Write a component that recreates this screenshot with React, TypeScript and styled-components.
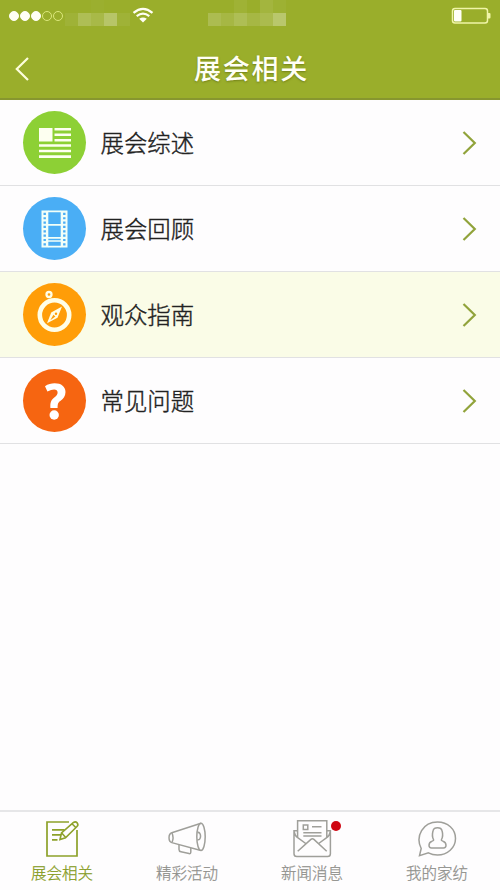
import React from 'react';
import styled, { createGlobalStyle } from 'styled-components';

const GlobalStyle = createGlobalStyle`
  * { box-sizing: border-box; }
  body { margin: 0; background: #fdfcfd; font-family: 'Noto Sans CJK SC', sans-serif; }
  svg { display: block; flex: none; }
`;

const Screen = styled.div`
  width: 500px;
  height: 890px;
  display: flex;
  flex-direction: column;
  overflow: hidden;
  background: #fefdfe;
`;

const Header = styled.header`
  height: 100px;
  flex: none;
  background: #9aae2b;
  border-bottom: 2px solid #87962f;
`;

const StatusBar = styled.div`
  height: 38px;
  display: flex;
  align-items: flex-start;
`;

const Signal = styled.div`
  display: flex;
  gap: 1px;
  width: 65px;
  padding: 11px 0 0 9px;
`;

const Dot = styled.i<{ $on: boolean }>`
  width: 10px;
  height: 10px;
  border-radius: 50%;
  background: ${(p) => (p.$on ? '#fffff5' : 'transparent')};
  border: 1.5px solid ${(p) => (p.$on ? '#fffff5' : '#dce87c')};
`;

const Mosaic = styled.div<{ $columns: number }>`
  display: grid;
  grid-template-columns: repeat(${(p) => p.$columns}, 13px);
  grid-template-rows: repeat(2, 13px);
`;

const Tile = styled.i<{ $alpha: number }>`
  background: rgba(255, 255, 255, ${(p) => p.$alpha});
`;

const WifiSlot = styled.div`
  width: 78px;
  padding: 7px 0 0 2px;
`;

const BatterySlot = styled.div`
  flex: 1;
  display: flex;
  justify-content: flex-end;
  padding: 7px 9px 0 0;
`;

const TitleBar = styled.div`
  height: 60px;
  display: grid;
  grid-template-columns: 60px 1fr 60px;
  align-items: center;
`;

const BackButton = styled.button`
  border: 0;
  background: none;
  padding: 1px 0 0 14px;
`;

const Title = styled.h1`
  margin: 0;
  padding: 0 0 0 3px;
  text-align: center;
  font-size: 27px;
  line-height: 40px;
  font-weight: 500;
  letter-spacing: 1.8px;
  color: #fffff5;
  text-shadow: 0 1px 2px rgba(92, 105, 15, 0.65);
`;

const List = styled.main`
  flex: 1;
`;

const Row = styled.div<{ $active?: boolean }>`
  height: 86px;
  display: flex;
  align-items: center;
  padding: 0 23px;
  background: ${(p) => (p.$active ? '#fafce7' : '#fefdfe')};
  border-bottom: 1px solid #e1e1e3;
`;

const Badge = styled.div<{ $color: string }>`
  width: 63px;
  height: 63px;
  border-radius: 50%;
  background: ${(p) => p.$color};
  display: flex;
  align-items: center;
  justify-content: center;
  flex: none;
`;

const Label = styled.span`
  flex: 1;
  margin-left: 14.5px;
  padding-bottom: 1px;
  font-size: 23.4px;
  line-height: 34px;
  font-weight: 300;
  color: #222;
  -webkit-text-stroke: 0.4px #222;
`;

const Tabs = styled.nav`
  height: 80px;
  flex: none;
  display: grid;
  grid-template-columns: repeat(4, 125px);
  border-top: 2px solid #e6e6e8;
`;

const Tab = styled.button<{ $active?: boolean }>`
  border: 0;
  background: none;
  padding: 7px 1px 0 0;
  font: inherit;
  font-size: 15.5px;
  line-height: 22px;
  font-weight: 300;
  color: ${(p) => (p.$active ? '#869b22' : '#90908c')};
  -webkit-text-stroke: 0.25px currentColor;
  display: flex;
  flex-direction: column;
  align-items: center;
  gap: 2px;
`;

const TabIcon = styled.div<{ $active?: boolean }>`
  position: relative;
  width: 40px;
  height: 40px;
  color: ${(p) => (p.$active ? '#8da12a' : '#9f9f9a')};
`;

const Notice = styled.i`
  position: absolute;
  left: 39px;
  top: 2px;
  width: 10px;
  height: 10px;
  border-radius: 50%;
  background: #cf0612;
`;

const carrierTiles = [0, 0, 0.02, 0, 0, 0.06, 0.2, 0.14, 0.29, 0.06];
const clockTiles = [0, 0, 0.05, 0, 0.09, 0.04, 0.18, 0.12, 0.2, 0.12, 0.17, 0.31];

const Wifi = () => (
  <svg width="22" height="17" viewBox="0 0 22 17" fill="none" stroke="#fffff5" strokeWidth="2.2">
    <path d="M1.5 5.8Q11-2.2 20.5 5.8M4.7 9.2Q11 4.2 17.3 9.2" />
    <path d="M7.2 11.8Q11 9.2 14.8 11.8L11 15.5Z" fill="#fffff5" stroke="none" />
  </svg>
);

const Battery = () => (
  <svg width="40" height="18" viewBox="0 0 40 18" fill="none">
    <rect x="1.5" y="1.5" width="35" height="14.5" rx="2.5" stroke="#f0f5a8" strokeWidth="1.5" />
    <rect x="3" y="3" width="7.5" height="11.5" rx="1" fill="#fffff8" />
    <path d="M37 6h1.5q1 0 1 1v3.5q0 1-1 1H37z" fill="#f0f5a8" />
  </svg>
);

const ArticleIcon = () => (
  <svg width="33" height="32" viewBox="0 0 33 32" fill="#fdfff0">
    <path d="M1 1h13.5v13.5H1zM16.5 1H33v2.5H16.5zM16.5 6.4H33v2.5H16.5zM16.5 12H33v2.5H16.5zM1 17.3h32v2.5H1zM1 22.8h32v2.5H1zM1 28.2h32V31H1z" />
  </svg>
);

const FilmIcon = () => (
  <svg width="27" height="40" viewBox="0 0 27 40" fill="none">
    <path d="M.5 1.5h6.8v37H.5zM19.7 1.5h6.8v37h-6.8z" fill="#f2fff8" />
    <path d="M7 2.3h13M7 15.9h13M7 28.8h13M7 32h13M7 37.7h13" stroke="#f2fff8" strokeWidth="1.7" />
    <path d="M3.7 3.8v33M23.3 3.8v33" stroke="#4aaef5" strokeWidth="2.4" strokeDasharray="2.2 2.15" />
  </svg>
);

const CompassIcon = () => (
  <svg width="63" height="63" viewBox="0 0 63 63" fill="none" stroke="#fffee7">
    <circle cx="26" cy="11.5" r="2.5" strokeWidth="2.3" />
    <circle cx="31.5" cy="32" r="14.7" strokeWidth="4.6" />
    <path d="M39 23.5L34.5 34.7 24 40.3 28.2 29.5Z" fill="#fffee7" stroke="none" />
    <path d="M27.3 37.3l3.1-5.5 2 1.7z" fill="#ff9d08" stroke="none" />
    <circle cx="33" cy="30.8" r="1.2" fill="#ff9d08" stroke="none" />
  </svg>
);

const QuestionIcon = () => (
  <svg width="25" height="40" viewBox="0 0 25 40" fill="#fff">
    <path d="M3 5.2C6 3.2 9.3 2.3 12.6 2.3c6.8 0 10.9 3.4 10.9 8.8 0 4.2-2.1 6.8-5.2 9-2.4 1.7-2.6 2.9-2.7 7H8.4c-.3-5.9.5-7.7 3.9-10.6 2.4-2 3.3-3 3.3-5 0-3.7-4.4-4.2-10.2-.9Z" />
    <circle cx="12.2" cy="34" r="4.7" />
  </svg>
);

const Arrow = () => (
  <svg width="16" height="26" viewBox="0 0 16 26" fill="none" stroke="#91a33b" strokeWidth="2.2">
    <path d="M2.5 2l11.3 11L2.5 24" />
  </svg>
);

const NotesIcon = () => (
  <svg width="40" height="40" viewBox="0 0 40 40" fill="none" stroke="currentColor" strokeWidth="1.7">
    <path d="M27 3H5v34h30V11M10 10.8h12.5M10 15.8h9M10 20.8h5.5" />
    <path d="M18 20.5l1.5-6.5L31.5 3.5q2-1.4 3.7.4 1.5 1.9-.2 3.6L23.5 18.7zM30 4.8l4 4M19.7 14l3.8 4.2" strokeWidth="1.6" />
  </svg>
);

const MegaphoneIcon = () => (
  <svg width="40" height="40" viewBox="0 0 40 40" fill="none" stroke="currentColor" strokeWidth="1.5">
    <path d="M34 4.3L4.8 13.8c-3.7 1.2-3.7 8.6 0 9.8L33 31.3" />
    <ellipse cx="34" cy="17.8" rx="4.2" ry="13.6" />
    <path d="M5 14q2.1 4.8 0 9.5M30.4 13.5c4-1.3 4.4 8.2 0 7.2M12 26v4.4q0 2 2 2.4l8 1.8q1.8.3 1.8-1.6v-4" />
  </svg>
);

const MailIcon = () => (
  <svg width="40" height="40" viewBox="0 0 40 40" fill="none" stroke="currentColor" strokeWidth="1.5">
    <path d="M5.6 11.8H2v23q0 2.8 2.8 2.8h30.8q2.8 0 2.8-2.8v-23h-3.6M5.6 18V1.8h29.2V18M2 12.5q1 4.5 3.7 6.2L14.4 25M38.4 12.5q-1 4.5-3.7 6.2L26 25M5.7 32.2l13.2-11.8q1.5-1.3 3 0l12.8 11.8" />
    <path d="M11.3 6h4.5v4.5h-4.5zM20 7.8h9.5M11.3 13.7h18.2M11.3 17h18.2" />
  </svg>
);

const ProfileIcon = () => (
  <svg width="40" height="40" viewBox="0 0 40 40" fill="none" stroke="currentColor" strokeWidth="1.5">
    <path d="M4.2 29.5C-2 17.2 6 3.1 20.5 3.1c10.3 0 18 7.1 18 16.4S30.4 36 20.5 36q-5 0-9.1-2.2L2.5 36.6z" />
    <path d="M16.5 20.5c-1.8-3.2-1.1-6.5-.4-9 .9-3.7 8-3.7 8.9 0 .7 2.5 1.3 5.8-.5 9-.4 1 .2 1.2 1.5 1.7 2.3.8 3 1.6 3 4.1 0 2-.5 2.6-2.5 2.6h-12c-2 0-2.5-.6-2.5-2.6 0-2.5.7-3.3 3-4.1 1.3-.5 1.9-.7 1.5-1.7z" />
  </svg>
);

const rows = [
  { label: '展会综述', color: '#8dd035', icon: <ArticleIcon /> },
  { label: '展会回顾', color: '#4aaef5', icon: <FilmIcon /> },
  { label: '观众指南', color: '#ff9d08', icon: <CompassIcon />, active: true },
  { label: '常见问题', color: '#f66511', icon: <QuestionIcon /> },
];

const tabs = [
  { label: '展会相关', icon: <NotesIcon />, active: true },
  { label: '精彩活动', icon: <MegaphoneIcon /> },
  { label: '新闻消息', icon: <MailIcon />, notice: true },
  { label: '我的家纺', icon: <ProfileIcon /> },
];

export default function App() {
  return (
    <Screen>
      <GlobalStyle />
      <Header>
        <StatusBar>
          <Signal>{[0, 1, 2, 3, 4].map((n) => <Dot key={n} $on={n < 3} />)}</Signal>
          <Mosaic $columns={5}>{carrierTiles.map((a, i) => <Tile key={i} $alpha={a} />)}</Mosaic>
          <WifiSlot><Wifi /></WifiSlot>
          <Mosaic $columns={6}>{clockTiles.map((a, i) => <Tile key={i} $alpha={a} />)}</Mosaic>
          <BatterySlot><Battery /></BatterySlot>
        </StatusBar>
        <TitleBar>
          <BackButton aria-label="返回">
            <svg width="17" height="26" viewBox="0 0 17 26" fill="none" stroke="#fdfedc" strokeWidth="2.2">
              <path d="M14 2L2.8 13 14 24" />
            </svg>
          </BackButton>
          <Title>展会相关</Title>
        </TitleBar>
      </Header>
      <List>
        {rows.map((row) => (
          <Row key={row.label} $active={row.active}>
            <Badge $color={row.color}>{row.icon}</Badge>
            <Label>{row.label}</Label>
            <Arrow />
          </Row>
        ))}
      </List>
      <Tabs>
        {tabs.map((tab) => (
          <Tab key={tab.label} $active={tab.active}>
            <TabIcon $active={tab.active}>{tab.icon}{tab.notice && <Notice />}</TabIcon>
            {tab.label}
          </Tab>
        ))}
      </Tabs>
    </Screen>
  );
}
